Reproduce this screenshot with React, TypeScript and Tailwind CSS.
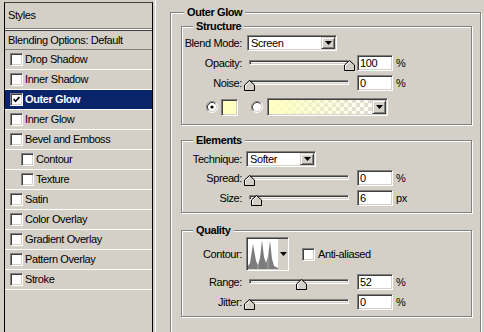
import React from 'react';

// classic win32 bevels
const sunken =
  'border border-t-[#808080] border-l-[#808080] border-b-white border-r-white shadow-[inset_1px_1px_0_#404040,inset_-1px_-1px_0_#d4d0c8]';
const raised =
  'border border-t-[#d4d0c8] border-l-[#d4d0c8] border-b-[#404040] border-r-[#404040] shadow-[inset_1px_1px_0_#ffffff,inset_-1px_-1px_0_#808080] bg-[#d4d0c8]';
const etched = 'border border-[#808080] shadow-[inset_1px_1px_0_#ffffff,1px_1px_0_#ffffff] min-w-0';

type Item = { label: string; sub?: boolean; checked?: boolean; active?: boolean };

const items: Item[] = [
  { label: 'Drop Shadow' },
  { label: 'Inner Shadow' },
  { label: 'Outer Glow', checked: true, active: true },
  { label: 'Inner Glow' },
  { label: 'Bevel and Emboss' },
  { label: 'Contour', sub: true },
  { label: 'Texture', sub: true },
  { label: 'Satin' },
  { label: 'Color Overlay' },
  { label: 'Gradient Overlay' },
  { label: 'Pattern Overlay' },
  { label: 'Stroke' },
];

const CheckBox = ({ checked = false }: { checked?: boolean }) => (
  <span className={`w-[13px] h-[13px] shrink-0 bg-white flex items-center justify-center ${sunken}`}>
    {checked && (
      <svg width="7" height="7" viewBox="0 0 7 7">
        <path d="M0.6 3.2 L2.6 5.3 L6.5 1" fill="none" stroke="#000" strokeWidth="1.7" />
      </svg>
    )}
  </span>
);

const DownArrow = () => (
  <svg width="7" height="4" viewBox="0 0 7 4">
    <path d="M0 0H7L3.5 4Z" fill="#000" />
  </svg>
);

const Select = ({ value, className }: { value: string; className: string }) => (
  <div className={`h-[16px] bg-white flex items-center shrink-0 ${sunken} ${className}`}>
    <span className="flex-1 pl-[3px]">{value}</span>
    <span className={`w-[14px] h-[12px] mr-[1px] flex items-center justify-center ${raised}`}>
      <DownArrow />
    </span>
  </div>
);

const Slider = ({ pos }: { pos: number }) => (
  <div className="relative w-[110px] h-[16px] ml-[2px] shrink-0">
    <div className={`absolute left-[5px] top-[5px] w-[100px] h-[5px] bg-[#f4f2ee] ${sunken}`} />
    <svg
      className="absolute top-[5px]"
      style={{ left: Math.round(pos * 100) }}
      width="11"
      height="11"
      viewBox="0 0 11 11"
    >
      <path d="M0.5 10.5V5L5.5 0.5L10.5 5V10.5Z" fill="#d4d0c8" stroke="#000" />
      <path d="M1.5 9.5V5.4L5.5 1.9" fill="none" stroke="#fff" />
    </svg>
  </div>
);

const Field = ({ value }: { value: string }) => (
  <div className={`ml-[3px] w-[36px] h-[16px] bg-white pl-[2px] flex items-center shrink-0 ${sunken}`}>
    {value}
  </div>
);

const SliderRow = ({
  label,
  value,
  pos,
  unit,
  className,
}: {
  label: string;
  value: string;
  pos: number;
  unit: string;
  className: string;
}) => (
  <div className={`flex items-center h-[16px] ${className}`}>
    <span className="w-[60px] text-right shrink-0">{label}</span>
    <Slider pos={pos} />
    <Field value={value} />
    <span className="ml-[3px]">{unit}</span>
  </div>
);

const Radio = ({ checked = false }: { checked?: boolean }) => (
  <svg width="12" height="12" viewBox="0 0 12 12" className="shrink-0">
    <circle cx="6" cy="6" r="4.5" fill="#fff" />
    <path d="M2.11 9.89A5.5 5.5 0 0 1 9.89 2.11" fill="none" stroke="#808080" />
    <path d="M9.89 2.11A5.5 5.5 0 0 1 2.11 9.89" fill="none" stroke="#fff" />
    <path d="M2.82 9.18A4.5 4.5 0 0 1 9.18 2.82" fill="none" stroke="#404040" />
    <path d="M9.18 2.82A4.5 4.5 0 0 1 2.82 9.18" fill="none" stroke="#d4d0c8" />
    {checked && <circle cx="6" cy="6" r="1.6" fill="#000" />}
  </svg>
);

const StylesList = () => (
  <div className="ml-[4px] mt-[2px] w-[149px] h-[340px] shrink-0 border border-black border-t-[#404040] flex flex-col">
    <div className="h-[26px] pl-[3px] flex items-center border-b border-[#808080]">Styles</div>
    <div className="h-[1px] bg-white" />
    <div className="h-[1px] bg-[#404040]" />
    <div className="h-[19px] pl-[3px] flex items-center border-b border-[#808080]">Blending Options: Default</div>
    {items.map((it) => (
      <div
        key={it.label}
        className={`h-[20px] border-b border-white flex items-center gap-[2px] ${it.sub ? 'pl-[16px]' : 'pl-[5px]'} ${
          it.active ? 'bg-[#0a246a] text-white font-bold' : ''
        }`}
      >
        <CheckBox checked={it.checked} />
        <span>{it.label}</span>
      </div>
    ))}
  </div>
);

const ContourPreview = () => (
  <div className={`ml-[4px] w-[43px] h-[34px] flex shrink-0 bg-[#d4d0c8] ${sunken}`}>
    <svg width="30" height="30" viewBox="0 0 30 30" className="m-[1px] bg-white">
      <polygon
        points="0,30 0,27 2,24 5,5 8,22 10,26 12,19 14,1 16,18 18,24 20,17 22,2 24,20 26,27 30,29 30,30"
        fill="#7c7c7c"
      />
      <line x1="10" y1="0" x2="10" y2="30" stroke="#ffffff" strokeOpacity="0.35" />
      <line x1="20" y1="0" x2="20" y2="30" stroke="#ffffff" strokeOpacity="0.35" />
    </svg>
    <div className="flex-1 flex items-center justify-center">
      <DownArrow />
    </div>
  </div>
);

export default function App() {
  return (
    <div className="w-[484px] h-[332px] overflow-hidden bg-[#d4d0c8] flex font-['Liberation_Sans',Arial,sans-serif] text-[11px] leading-[13px] tracking-[-0.4px] text-black">
      <StylesList />

      <div className="ml-[2px] flex-1 border-l border-white">
        <fieldset className={`ml-[14px] mt-[6px] w-[311px] h-[340px] ${etched}`}>
          <legend className="ml-[13px] px-[3px] font-bold bg-[#d4d0c8]">Outer Glow</legend>

          {/* Structure */}
          <fieldset className={`ml-[10px] mt-[1px] w-[291px] pb-[8px] ${etched}`}>
            <legend className="ml-[11px] px-[3px] font-bold bg-[#d4d0c8]">Structure</legend>
            <div className="flex items-center h-[16px] mt-[2px]">
              <span className="w-[60px] text-right shrink-0">Blend Mode:</span>
              <Select value="Screen" className="ml-[5px] w-[90px]" />
            </div>
            <SliderRow label="Opacity:" value="100" pos={1} unit="%" className="mt-[4px]" />
            <SliderRow label="Noise:" value="0" pos={0} unit="%" className="mt-[4px]" />
            <div className="flex items-center h-[18px] mt-[7px]">
              <span className="ml-[24px]">
                <Radio checked />
              </span>
              <span className={`ml-[3px] w-[17px] h-[17px] bg-[#ffffc0] shrink-0 ${sunken}`} />
              <span className="ml-[13px]">
                <Radio />
              </span>
              <div
                className={`ml-[4px] w-[121px] h-[18px] flex items-center shrink-0 bg-[image:linear-gradient(to_right,#ffffc0,rgba(255,255,192,0)),repeating-conic-gradient(#d6d6d6_0%_25%,#ffffff_0%_50%)] bg-size-[100%_100%,8px_8px] ${sunken}`}
              >
                <span className="flex-1" />
                <span className={`w-[14px] h-[14px] mr-[1px] flex items-center justify-center ${raised}`}>
                  <DownArrow />
                </span>
              </div>
            </div>
          </fieldset>

          {/* Elements */}
          <fieldset className={`ml-[10px] mt-[9px] w-[291px] pb-[6px] ${etched}`}>
            <legend className="ml-[11px] px-[3px] font-bold bg-[#d4d0c8]">Elements</legend>
            <div className="flex items-center h-[16px] mt-[4px]">
              <span className="w-[60px] text-right shrink-0">Technique:</span>
              <Select value="Softer" className="ml-[4px] w-[70px]" />
            </div>
            <SliderRow label="Spread:" value="0" pos={0} unit="%" className="mt-[3px]" />
            <SliderRow label="Size:" value="6" pos={0.07} unit="px" className="mt-[4px]" />
          </fieldset>

          {/* Quality */}
          <fieldset className={`ml-[10px] mt-[11px] w-[291px] pb-[6px] ${etched}`}>
            <legend className="ml-[11px] px-[3px] font-bold bg-[#d4d0c8]">Quality</legend>
            <div className="flex items-center h-[34px]">
              <span className="w-[60px] text-right shrink-0">Contour:</span>
              <ContourPreview />
              <span className="ml-[13px]">
                <CheckBox />
              </span>
              <span className="ml-[3px]">Anti-aliased</span>
            </div>
            <SliderRow label="Range:" value="52" pos={0.52} unit="%" className="mt-[3px]" />
            <SliderRow label="Jitter:" value="0" pos={0} unit="%" className="mt-[4px]" />
          </fieldset>
        </fieldset>
      </div>
    </div>
  );
}
